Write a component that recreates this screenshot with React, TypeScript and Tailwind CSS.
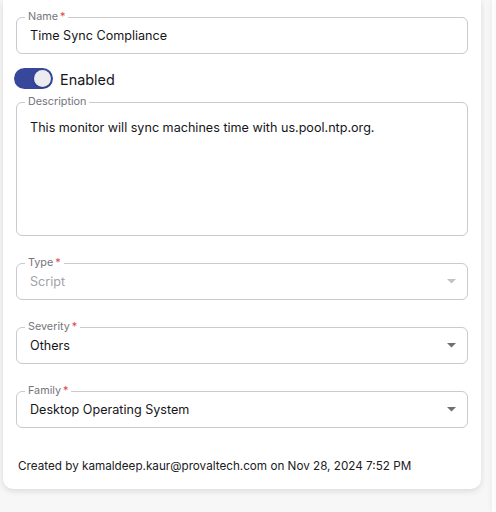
const Arrow = ({ muted }: { muted?: boolean }) => {
	return (
		<svg className="w-[9px] h-[5px]" viewBox="0 0 9 5">
			<path d="M0 0 L9 0 L4.5 4.5 Z" fill={muted ? '#c2c2c2' : '#707070'} />
		</svg>
	);
};

const Field = ({
	label,
	value,
	required,
	select,
	disabled,
	className,
}: {
	label: string;
	value: string;
	required?: boolean;
	select?: boolean;
	disabled?: boolean;
	className?: string;
}) => {
	return (
		<div className={`relative border border-[#c9c9cf] rounded-[6px] h-[37px] flex items-center pl-[13px] pr-[11px] ${className ?? ''}`}>
			<span className="absolute -top-[7px] left-[8px] bg-white px-[3px] text-[10.8px] leading-[12px] text-[#74747c]">
				{label}
				{required && <span className="text-[#e0454c] ml-[2px]">*</span>}
			</span>
			<span className={`flex-1 pt-[2px] text-[12.6px] ${disabled ? 'text-[#a3a3a8]' : 'text-[#16161a]'}`}>{value}</span>
			{select && <Arrow muted={disabled} />}
		</div>
	);
};

export default function App() {
	return (
		<div className="w-[496px] h-[512px] bg-[#f7f7f7] flex overflow-hidden font-['Inter',sans-serif]">
			<div className="ml-[3px] w-[478px] h-[489px] bg-white rounded-b-[10px] shadow-[0_2px_6px_rgba(0,0,0,0.12)] px-[13px] pt-[17px] flex flex-col">
				<Field label="Name" value="Time Sync Compliance" required />

				<div className="mt-[14px] -ml-[2px] flex items-center h-[21px]">
					<div className="relative w-[39px] h-[21px] rounded-full bg-[#36479c]">
						<div className="absolute right-[2px] top-[2px] w-[17px] h-[17px] rounded-full bg-[#ebebf0] shadow-[0_1px_2px_rgba(0,0,0,0.25)]" />
					</div>
					<span className="ml-[7px] mt-[2px] text-[14.4px] text-[#16161a]">Enabled</span>
				</div>

				<div className="relative mt-[13px] h-[134px] border border-[#c9c9cf] rounded-[6px] pl-[13px] pt-[16px]">
					<span className="absolute -top-[7px] left-[8px] bg-white px-[3px] text-[10.8px] leading-[12px] text-[#74747c]">
						Description
					</span>
					<p className="text-[12.6px] leading-[18px] text-[#16161a]">
						This monitor will sync machines time with us.pool.ntp.org.
					</p>
				</div>

				<Field className="mt-[27px]" label="Type" value="Script" required select disabled />
				<Field className="mt-[27px]" label="Severity" value="Others" required select />
				<Field className="mt-[27px]" label="Family" value="Desktop Operating System" required select />

				<p className="mt-[29px] ml-[2px] text-[11.7px] leading-[18px] text-[#202024]">
					Created by kamaldeep.kaur@provaltech.com on Nov 28, 2024 7:52 PM
				</p>
			</div>
			<div className="ml-[11px] w-[4px] h-full bg-[#fcfcfc] shadow-[-2px_0_4px_rgba(0,0,0,0.04)]" />
		</div>
	);
}
